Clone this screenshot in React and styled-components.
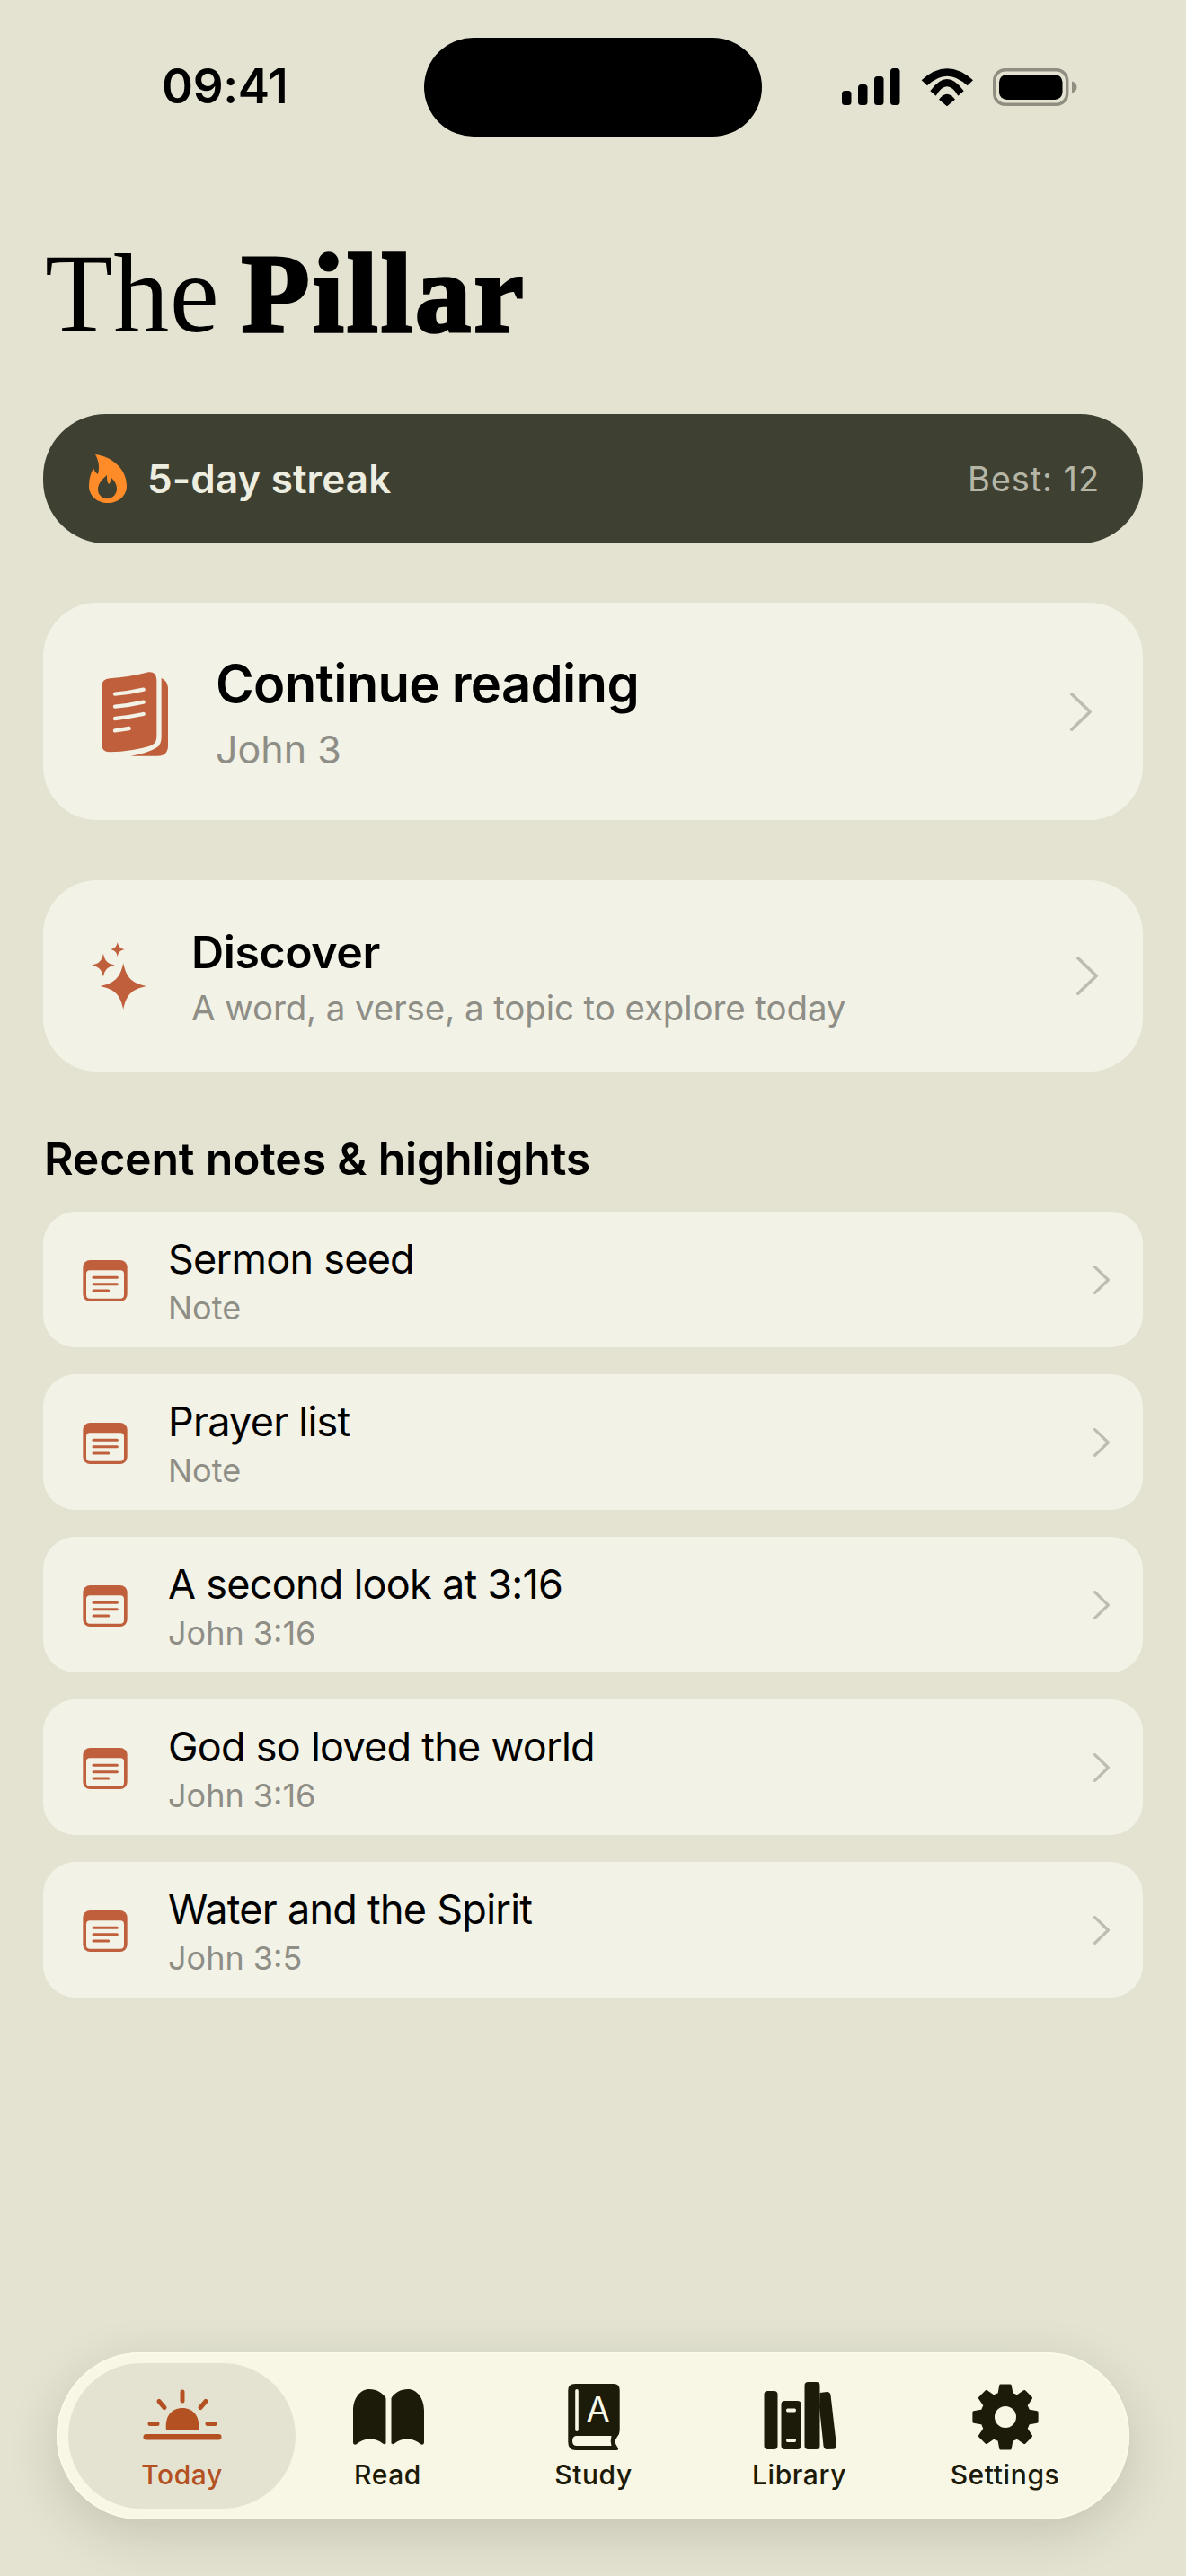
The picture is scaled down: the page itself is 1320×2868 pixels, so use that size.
import React from "react";
import styled, { createGlobalStyle } from "styled-components";

const Global = createGlobalStyle`
  html, body { margin: 0; padding: 0; background: #E4E3D2; }
  * { box-sizing: border-box; }
`;
const Page = styled.div`
  width: 1320px; height: 2868px; display: flex; flex-direction: column;
  background: #E4E3D2; font-family: Inter, "Liberation Sans", sans-serif; color: #000; overflow: hidden;
`;
const StatusBar = styled.div`
  margin-top: 42px; height: 110px; display: grid; grid-template-columns: 472px 376px 1fr; align-items: center; flex: none;
`;
const Time = styled.div`
  padding-left: 180px; font-size: 53px; font-weight: 600; line-height: 1; letter-spacing: -0.3px; margin-top: -1px;
`;
const Island = styled.div`width: 376px; height: 110px; border-radius: 55px; background: #000;`;
const StatusIcons = styled.div`
  display: flex; align-items: center; padding-left: 89px; margin-top: -1px;
  svg { display: block; flex: none; }
`;
const Content = styled.main`padding: 0 48px; display: flex; flex-direction: column; flex: none;`;
const Title = styled.h1`
  margin: 111px 0 0 2px; height: 130px; font-family: "Liberation Serif", serif; font-size: 124px; line-height: 130px;
  font-weight: 400; letter-spacing: 0.5px; word-spacing: -7px; color: #000; white-space: nowrap;
  b { font-weight: 700; -webkit-text-stroke: 3.5px #000; letter-spacing: 3.5px; }
`;
const Streak = styled.section`
  margin-top: 68px; height: 144px; border-radius: 70px; background: #3E4032; display: flex; align-items: center;
  padding: 0 48px 0 51px; gap: 23px;
`;
const StreakLabel = styled.span`font-size: 44px; font-weight: 600; color: #EDEDE0; flex: 1; white-space: nowrap; letter-spacing: .1px;`;
const StreakBest = styled.span`font-size: 38px; font-weight: 400; color: #B6B6A6; white-space: nowrap; letter-spacing: .9px;`;
const Card = styled.section`
  background: #F2F2E6; display: flex; align-items: center; flex: none;
  height: ${p => p.$h}px; border-radius: ${p => p.$r}px; margin-top: ${p => p.$mt}px;
  padding: 0 ${p => p.$pr}px 0 ${p => p.$pl}px; gap: ${p => p.$gap}px;
  svg { display: block; flex: none; }
`;
const CardText = styled.div`flex: 1; min-width: 0; display: flex; flex-direction: column;`;
const HeroTitle = styled.div`font-size: 58px; font-weight: 600; line-height: 70px; letter-spacing: -0.7px; white-space: nowrap; margin-top: 2px;`;
const HeroSub = styled.div`font-size: 43px; line-height: 54px; margin-top: 11px; color: #8E8E87; white-space: nowrap;`;
const DiscoverTitle = styled.div`font-size: 50px; font-weight: 600; line-height: 60px; letter-spacing: -0.4px; white-space: nowrap; margin-top: 2px;`;
const DiscoverSub = styled.div`font-size: 38.5px; line-height: 48px; margin-top: 8px; color: #8E8E87; letter-spacing: -0.1px; white-space: nowrap;`;
const Heading = styled.h2`margin: 64px 0 0 1px; font-size: 50px; line-height: 66px; font-weight: 600; letter-spacing: -0.2px; white-space: nowrap;`;
const List = styled.div`margin-top: 26px; display: flex; flex-direction: column; gap: 30px;`;
const Row = styled.div`
  height: 151px; border-radius: 36px; background: #F2F2E6; display: flex; align-items: center; padding: 0 37px 0 44px; gap: 45px;
  svg { display: block; flex: none; }
`;
const RowText = styled.div`flex: 1; min-width: 0; padding-top: 4px;`;
const RowTitle = styled.div`font-size: 45px; line-height: 54px; font-weight: 400; white-space: nowrap; letter-spacing: -0.75px;`;
const RowSub = styled.div`font-size: 36px; line-height: 44px; color: #8E8E87; margin-top: 5px; white-space: nowrap;`;
const TabBar = styled.nav`
  margin: auto 63px 63px; height: 186px; border-radius: 93px; background: #F8F7E6; flex: none;
  display: grid; grid-template-columns: repeat(5, 229px); padding: 31px 25px 0;
  box-shadow: 0 0 0 1.5px #FBFAEC inset, 0 16px 56px rgba(40, 36, 10, .16);
`;
const Tab = styled.div`
  position: relative; display: flex; flex-direction: column; align-items: center;
  color: ${p => (p.$active ? "#B35122" : "#1C1A08")};
  svg { display: block; position: relative; }
  ${p => p.$active && `&::before { content: ""; position: absolute; left: -12px; right: -12px; top: -19px; height: 162px; border-radius: 81px; background: #E4E3D2; }`}
`;
const TabLabel = styled.span`position: relative; font-size: 30px; line-height: 36px; font-weight: 500; margin-top: 7px; letter-spacing: .6px; white-space: nowrap;`;

const Signal = () => (
  <svg width="65" height="41" viewBox="0 0 65 41" fill="#000">
    <rect x="0" y="25" width="10.5" height="16" rx="3.5" /><rect x="18" y="18" width="10.5" height="23" rx="3.5" />
    <rect x="36" y="9" width="10.5" height="32" rx="3.5" /><rect x="54" y="0" width="10.5" height="41" rx="3.5" />
  </svg>
);
const Wifi = () => (
  <svg width="58" height="42" viewBox="373 74 174 126" fill="#000" style={{ marginLeft: 23 }}>
    <path d="M375 114Q460 36 547 114L528 132Q460 68 394 132Z" />
    <path d="M404 150Q460 70 516 150L497 166Q460 104 423 166Z" />
    <path d="M433 178Q460 142 487 178L460 201Z" />
  </svg>
);
const Battery = () => (
  <svg width="94" height="42" viewBox="0 0 94 42" style={{ marginLeft: 22 }}>
    <rect x="1.7" y="1.7" width="81" height="38.6" rx="12" fill="none" stroke="#8F8E80" strokeWidth="3.4" />
    <rect x="7" y="7" width="70.5" height="28" rx="8.5" fill="#000" />
    <path d="M88 14.5c3.5.8 5.5 3.4 5.5 6.5s-2 5.7-5.5 6.5z" fill="#8F8E80" />
  </svg>
);
const Flame = () => (
  <svg width="42" height="54" viewBox="0 0 42 54">
    <path fillRule="evenodd" fill="#FF8C28" d="M7 0C24 2 42 15 42 35C42 46 33 54 21 54C9 54 0 46 0 35C0 27 2 21 5 15C6 18 7 20 10 22C12 14 11 7 7 0ZM22 49C27 48 31 44 31 38C31 33 28 29 25 26C25 29 24 31 22 33C20 31 20 27 20 23C14 28 10 33 10 39C10 45 15 50 22 49Z" />
  </svg>
);
const BookIcon = () => (
  <svg width="74" height="94" viewBox="68 54 222 282" style={{ marginTop: 5, marginLeft: 1 }}>
    <path fill="#BF5F3B" d="M68 105Q68 78 95 76Q160 72 225 55Q250 52 252 80L252 270Q252 295 228 302Q170 320 95 322Q68 322 68 295Z" />
    <path fill="#BF5F3B" d="M268 75Q290 85 290 112L290 300Q290 335 255 335L165 335Q225 325 255 305Q268 295 268 270Z" />
    <g fill="none" stroke="#F2F2E6" strokeWidth="13" strokeLinecap="round">
      <path d="M113 128Q160 124 208 113" /><path d="M113 170Q160 166 208 155" /><path d="M113 210Q160 205 208 195" /><path d="M113 250L160 243" />
    </g>
  </svg>
);
const star = (cx, cy, rx, ry) => {
  const a = 0.14, b = 0.36;
  return `M${cx} ${cy - ry}C${cx + rx * a} ${cy - ry * b} ${cx + rx * b} ${cy - ry * a} ${cx + rx} ${cy}C${cx + rx * b} ${cy + ry * a} ${cx + rx * a} ${cy + ry * b} ${cx} ${cy + ry}C${cx - rx * a} ${cy + ry * b} ${cx - rx * b} ${cy + ry * a} ${cx - rx} ${cy}C${cx - rx * b} ${cy - ry * a} ${cx - rx * a} ${cy - ry * b} ${cx} ${cy - ry}Z`;
};
const Sparkles = () => (
  <svg width="61" height="75" viewBox="68 61 180 222" fill="#BF5F3B">
    <path d={star(172, 206, 76, 76)} /><path d={star(106, 137, 38, 38)} /><path d={star(153, 85, 24, 24)} />
  </svg>
);
const Chevron = ({ w, h, sw }) => (
  <svg width={w} height={h} viewBox={`0 0 ${w} ${h}`} fill="none" stroke="#BDBDB4" strokeWidth={sw} strokeLinecap="round" strokeLinejoin="round">
    <path d={`M${sw / 2} ${sw / 2}L${w - sw / 2} ${h / 2}L${sw / 2} ${h - sw / 2}`} />
  </svg>
);
const NoteIcon = () => (
  <svg width="50" height="46" viewBox="67 39 148 138" style={{ marginTop: 2 }}>
    <rect x="67" y="39" width="148" height="138" rx="24" fill="#BF5F3B" />
    <rect x="78" y="73" width="126" height="94" rx="12" fill="#F2F2E6" />
    <g stroke="#BF5F3B" strokeWidth="9" strokeLinecap="round">
      <path d="M102 97H181" /><path d="M102 119H181" /><path d="M102 141H152" />
    </g>
  </svg>
);
const TabSvg = ({ children }) => (
  <svg width="100" height="80" viewBox="-50 0 100 80" fill="currentColor">{children}</svg>
);
const SunIcon = () => (
  <TabSvg>
    <rect x="-43.5" y="60" width="87" height="6.5" rx="3.2" />
    <path d="M-18 56C-20 40 -12 31 0 31C12 31 20 40 18 56Z" />
    <g stroke="currentColor" strokeWidth="5" strokeLinecap="round">
      <path d="M0 13V23" /><path d="M-26 23.500L-20 30.500" /><path d="M26 23.500L20 30.500" /><path d="M-36 48.500H-28" /><path d="M36 48.500H28" />
    </g>
  </TabSvg>
);
const ReadPage = "M-39 34C-39 20 -31 10 -21 10C-13 10 -6 14 -2.500 20V70C-3 71.500 -4.500 71.500 -6 70.500C-10 67 -15 65.500 -20 65.500C-26 65.500 -31 67.500 -35 71C-37 72.500 -39 71.500 -39 69Z";
const ReadIcon = () => (
  <TabSvg>
    <path d={ReadPage} />
    <path d={ReadPage} transform="scale(-1 1) translate(-1 0)" />
  </TabSvg>
);
const StudyIcon = () => (
  <TabSvg>
    <path d="M-21 4H22Q28.700 4 28.700 11V56Q28.700 60 26 63Q21.500 68.500 26 74Q28.700 78 25 78H-20Q-28.700 78 -28.700 69V11Q-28.700 4 -21 4Z" />
    <rect x="-20.800" y="10" width="3.600" height="47" rx="1.800" fill="#F8F7E6" />
    <path d="M-19 62H19.500Q18 67.500 19.500 73H-19Q-24 73 -24 67.500Q-24 62 -19 62Z" fill="#F8F7E6" />
    <text x="4.500" y="46" textAnchor="middle" fontFamily="Inter, sans-serif" fontSize="38" fontWeight="400" fill="#F8F7E6">A</text>
  </TabSvg>
);
const LibraryIcon = () => (
  <TabSvg>
    <rect x="-39.500" y="12" width="15" height="65" rx="4" />
    <path fillRule="evenodd" d="M-16.500 23H-2.400Q1.600 23 1.600 27V73Q1.600 77 -2.400 77H-16.500Q-20.500 77 -20.500 73V27Q-20.500 23 -16.500 23ZM-13.500 31.500Q-15 31.500 -15 33.500Q-15 35.500 -13.500 35.500H-5.500Q-4 35.500 -4 33.500Q-4 31.500 -5.500 31.500ZM-13.500 65Q-15 65 -15 67Q-15 69 -13.500 69H-5.500Q-4 69 -4 67Q-4 65 -5.500 65Z" />
    <rect x="5.500" y="2" width="17" height="75" rx="4" />
    <path d="M23 14L31 13Q34.500 13 35 16.500L41.500 73Q41.500 76.500 38 76.700L31 77Q27.500 77 27 73L22.500 30Z" transform="translate(-0.500 0)" />
  </TabSvg>
);
const gearPath = () => {
  const teeth = 8, R = 35.5, r = 26.5, pts = [];
  for (let i = 0; i < teeth; i++) {
    const c = (i * 2 * Math.PI) / teeth - Math.PI / 2;
    const add = (ang, rad) => pts.push(`${(rad * Math.cos(ang)).toFixed(2)} ${(41 + rad * Math.sin(ang)).toFixed(2)}`);
    add(c - 0.27, r); add(c - 0.15, R); add(c + 0.15, R); add(c + 0.27, r);
  }
  return `M${pts.join("L")}Z`;
};
const GearIcon = () => (
  <TabSvg>
    <path d={gearPath()} stroke="currentColor" strokeWidth="3" strokeLinejoin="round" />
    <circle cx="0" cy="41" r="12" fill="#F8F7E6" />
  </TabSvg>
);

const notes = [
  ["Sermon seed", "Note"], ["Prayer list", "Note"], ["A second look at 3:16", "John 3:16"],
  ["God so loved the world", "John 3:16"], ["Water and the Spirit", "John 3:5"],
];
const tabs = [
  ["Today", SunIcon, true], ["Read", ReadIcon], ["Study", StudyIcon], ["Library", LibraryIcon], ["Settings", GearIcon],
];

export default function App() {
  return (
    <Page>
      <Global />
      <StatusBar>
        <Time>09:41</Time>
        <Island />
        <StatusIcons><Signal /><Wifi /><Battery /></StatusIcons>
      </StatusBar>
      <Content>
        <Title>The <b>Pillar</b></Title>
        <Streak>
          <Flame />
          <StreakLabel>5-day streak</StreakLabel>
          <StreakBest>Best: 12</StreakBest>
        </Streak>
        <Card $h={242} $r={60} $mt={66} $pl={64} $pr={57} $gap={53}>
          <BookIcon />
          <CardText>
            <HeroTitle>Continue reading</HeroTitle>
            <HeroSub>John 3</HeroSub>
          </CardText>
          <Chevron w={24} h={43} sw={3.6} />
        </Card>
        <Card $h={213} $r={60} $mt={67} $pl={54} $pr={50} $gap={50}>
          <Sparkles />
          <CardText>
            <DiscoverTitle>Discover</DiscoverTitle>
            <DiscoverSub>A word, a verse, a topic to explore today</DiscoverSub>
          </CardText>
          <Chevron w={24} h={43} sw={3.6} />
        </Card>
        <Heading>Recent notes &amp; highlights</Heading>
        <List>
          {notes.map(([t, s]) => (
            <Row key={t}>
              <NoteIcon />
              <RowText>
                <RowTitle>{t}</RowTitle>
                <RowSub>{s}</RowSub>
              </RowText>
              <Chevron w={18} h={32} sw={3.2} />
            </Row>
          ))}
        </List>
      </Content>
      <TabBar>
        {tabs.map(([label, Icon, active]) => (
          <Tab key={label} $active={active}>
            <Icon />
            <TabLabel>{label}</TabLabel>
          </Tab>
        ))}
      </TabBar>
    </Page>
  );
}
